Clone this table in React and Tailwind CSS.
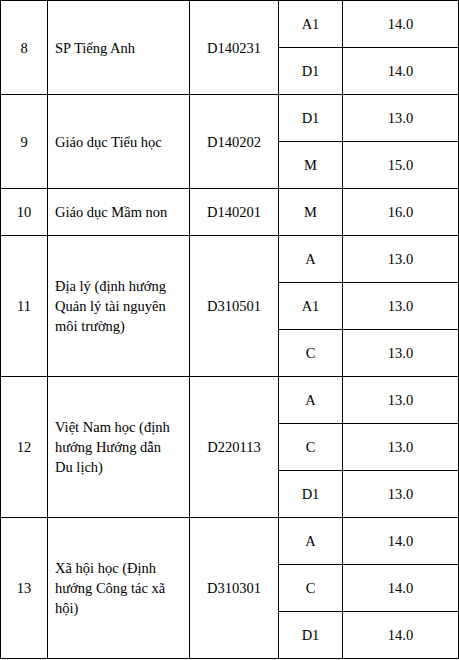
import React from 'react';

const rows = [
  { stt: '8', name: ['SP Tiếng Anh'], code: 'D140231', subs: [['A1', '14.0'], ['D1', '14.0']] },
  { stt: '9', name: ['Giáo dục Tiểu học'], code: 'D140202', subs: [['D1', '13.0'], ['M', '15.0']] },
  { stt: '10', name: ['Giáo dục Mầm non'], code: 'D140201', subs: [['M', '16.0']] },
  {
    stt: '11',
    name: ['Địa lý (định hướng', 'Quản lý tài nguyên', 'môi trường)'],
    code: 'D310501',
    subs: [['A', '13.0'], ['A1', '13.0'], ['C', '13.0']],
  },
  {
    stt: '12',
    name: ['Việt Nam học (định', 'hướng Hướng dẫn', 'Du lịch)'],
    code: 'D220113',
    subs: [['A', '13.0'], ['C', '13.0'], ['D1', '13.0']],
  },
  {
    stt: '13',
    name: ['Xã hội học (Định', 'hướng Công tác xã', 'hội)'],
    code: 'D310301',
    subs: [['A', '14.0'], ['C', '14.0'], ['D1', '14.0']],
  },
];

const cell =
  "border border-black align-middle font-['Liberation_Serif','Times_New_Roman',serif] text-[14.5px] leading-[20px] text-black";

export default function App() {
  return (
    <div className="w-[459px] h-[660px] bg-white overflow-hidden font-['Liberation_Serif','Times_New_Roman',serif]">
      <table className="table-fixed border-collapse w-[458px]">
        <colgroup>
          <col className="w-[47px]" />
          <col className="w-[142px]" />
          <col className="w-[89px]" />
          <col className="w-[64px]" />
          <col className="w-[116px]" />
        </colgroup>
        <tbody>
          {rows.map((r) =>
            r.subs.map((s, i) => (
              <tr key={r.stt + '-' + i} className="h-[47px]">
                {i === 0 && (
                  <>
                    <td rowSpan={r.subs.length} className={`${cell} text-center`}>
                      {r.stt}
                    </td>
                    <td rowSpan={r.subs.length} className={`${cell} pl-[7px] pr-2`}>
                      {r.name.map((n, k) => (
                        <div key={k}>{n}</div>
                      ))}
                    </td>
                    <td rowSpan={r.subs.length} className={`${cell} text-center`}>
                      {r.code}
                    </td>
                  </>
                )}
                <td className={`${cell} text-center`}>{s[0]}</td>
                <td className={`${cell} text-center`}>{s[1]}</td>
              </tr>
            ))
          )}
        </tbody>
      </table>
    </div>
  );
}
